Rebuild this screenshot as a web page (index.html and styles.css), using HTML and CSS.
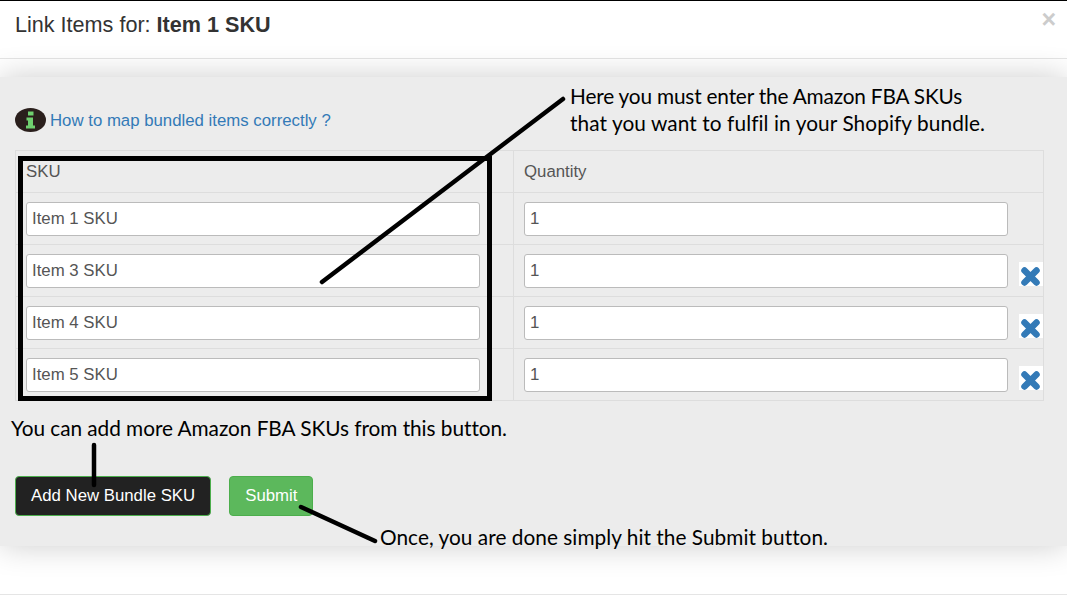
FILE: index.html
```html
<!DOCTYPE html>
<html lang="en">
<head>
  <meta charset="UTF-8">
  <meta name="viewport" content="width=device-width, initial-scale=1.0">
  <title>Link Items</title>
  <link rel="stylesheet" href="styles.css">
</head>
<body>
  <div class="modal">
    <div class="modal-header">
      <h4>Link Items for: <b>Item 1 SKU</b></h4>
      <span class="close">×</span>
    </div>

    <div class="modal-body">
      <div class="help">
        <svg class="info" width="31" height="24" viewBox="0 0 31 24">
          <ellipse cx="15.5" cy="12" rx="15.5" ry="12" fill="#2a1f1c"/>
          <rect x="13" y="3.5" width="5.5" height="4" fill="#6fd06f"/>
          <path d="M11.5 9.5h6.5v8h2v3h-9v-3h2v-5h-1.500z" fill="#6fd06f"/>
        </svg>
        <a href="#">How to map bundled items correctly ?</a>
      </div>

      <table class="sku-table">
        <thead>
          <tr>
            <th class="col-sku">SKU</th>
            <th>Quantity</th>
          </tr>
        </thead>
        <tbody>
          <tr>
            <td><input class="field" type="text" value="Item 1 SKU"></td>
            <td><div class="qty"><input class="field" type="text" value="1"></div></td>
          </tr>
          <tr>
            <td><input class="field" type="text" value="Item 3 SKU"></td>
            <td>
              <div class="qty">
                <input class="field" type="text" value="1">
                <svg class="remove" width="24" height="24" viewBox="0 0 24 24"><rect width="24" height="24" fill="#fff"/><path d="M5.500 8.500l12 12M17.500 8.500l-12 12" stroke="#337ab7" stroke-width="6.500" stroke-linecap="round"/></svg>
              </div>
            </td>
          </tr>
          <tr>
            <td><input class="field" type="text" value="Item 4 SKU"></td>
            <td>
              <div class="qty">
                <input class="field" type="text" value="1">
                <svg class="remove" width="24" height="24" viewBox="0 0 24 24"><rect width="24" height="24" fill="#fff"/><path d="M5.500 8.500l12 12M17.500 8.500l-12 12" stroke="#337ab7" stroke-width="6.500" stroke-linecap="round"/></svg>
              </div>
            </td>
          </tr>
          <tr>
            <td><input class="field" type="text" value="Item 5 SKU"></td>
            <td>
              <div class="qty">
                <input class="field" type="text" value="1">
                <svg class="remove" width="24" height="24" viewBox="0 0 24 24"><rect width="24" height="24" fill="#fff"/><path d="M5.500 8.500l12 12M17.500 8.500l-12 12" stroke="#337ab7" stroke-width="6.500" stroke-linecap="round"/></svg>
              </div>
            </td>
          </tr>
        </tbody>
      </table>

      <div class="buttons">
        <button class="btn btn-dark">Add New Bundle SKU</button>
        <button class="btn btn-green">Submit</button>
      </div>
    </div>

    <div class="modal-footer"></div>
  </div>

  <!-- annotations drawn on top of the screenshot -->
  <svg class="marks" width="1067" height="601" viewBox="0 0 1067 601">
    <rect x="20.500" y="158.500" width="469" height="240" fill="none" stroke="#000" stroke-width="5"/>
    <g stroke="#000" stroke-width="4.500" stroke-linecap="round" fill="none">
      <path d="M563 99L322 282"/>
      <path d="M94 445V485"/>
      <path d="M301 507L375 541"/>
    </g>
  </svg>
  <p class="note note-fba"><span class="tight">Here you must enter the Amazon FBA SKUs</span><br><span class="wide">that you want to fulfil in your Shopify bundle.</span></p>
  <p class="note note-add">You can add more Amazon FBA SKUs from this button.</p>
  <p class="note note-submit">Once, you are done simply hit the Submit button.</p>
</body>
</html>
```

FILE: styles.css
```css
html, body {
  margin: 0;
  padding: 0;
}

body {
  position: relative;
  width: 1067px;
  height: 601px;
  overflow: hidden;
  background-color: white;
  font-family: 'Liberation Sans', Arial, sans-serif;
  font-size: 16.8px;
  color: #555;
}

.modal {
  border-top: 1px solid #000;
  height: 600px;
  display: flex;
  flex-direction: column;
}

.modal-header {
  display: flex;
  justify-content: space-between;
  height: 58px;
  box-sizing: border-box;
  border-bottom: 1px solid #e5e5e5;
  padding: 11px 11px 0 15px;
}

.modal-header h4 {
  margin: 0;
  font-size: 21.6px;
  line-height: 26px;
  font-weight: normal;
  color: #333;
}

.close {
  font-size: 25px;
  line-height: 25px;
  font-weight: bold;
  color: #ccc;
  margin-top: -5px;
}

.modal-body {
  margin-top: 18px;
  height: 469px;
  box-sizing: border-box;
  padding: 30px 23px 0 15px;
  background-color: #ececec;
  box-shadow: 0 0 30px rgba(0, 0, 0, 0.2);
}

.help {
  display: flex;
  align-items: center;
  gap: 4px;
  height: 26px;
}

.help a {
  padding-top: 2px;
  color: #337ab7;
  text-decoration: none;
}

.sku-table {
  width: 1029px;
  margin-top: 17px;
  border-collapse: collapse;
  table-layout: fixed;
}

.sku-table th, .sku-table td {
  border: 1px solid #ddd;
  padding: 9px 0 8px 10px;
  text-align: left;
  font-weight: normal;
}

.sku-table th {
  height: 24px;
  padding-top: 9px;
}

.sku-table th.col-sku {
  width: 487px;
}

.sku-table td input {
  display: block;
}

.field {
  width: 454px;
  height: 34px;
  box-sizing: border-box;
  border: 1px solid #bbb;
  border-radius: 3px;
  padding: 0 5px;
  background-color: white;
  font-family: inherit;
  font-size: 16.8px;
  color: #555;
}

.qty {
  display: flex;
  align-items: flex-start;
  gap: 11px;
}

.qty .field {
  width: 484px;
  flex: none;
}

.remove {
  margin-top: 8px;
  flex: none;
}

.buttons {
  display: flex;
  gap: 18px;
  margin-top: 75px;
}

.btn {
  height: 40px;
  padding: 0 15px;
  border-radius: 4px;
  border: 1px solid #4cae4c;
  font-family: inherit;
  font-size: 16.8px;
  color: white;
}

.btn-dark {
  background-color: #222;
}

.btn-green {
  background-color: #5cb85c;
}

.modal-footer {
  margin-top: 48px;
  border-top: 1px solid #e5e5e5;
}

.marks {
  position: absolute;
  left: 0;
  top: 0;
}

.note {
  position: absolute;
  margin: 0;
  font-family: Lato, 'Open Sans', sans-serif;
  font-size: 20.8px;
  line-height: 27px;
  color: #000;
  white-space: nowrap;
}

.tight {
  letter-spacing: -0.18px;
}

.wide {
  letter-spacing: 0.09px;
}

.note-fba {
  left: 570px;
  top: 82px;
}

.note-add {
  left: 11px;
  top: 414px;
  letter-spacing: -0.04px;
}

.note-submit {
  left: 380px;
  top: 523px;
  letter-spacing: 0.04px;
}
```
